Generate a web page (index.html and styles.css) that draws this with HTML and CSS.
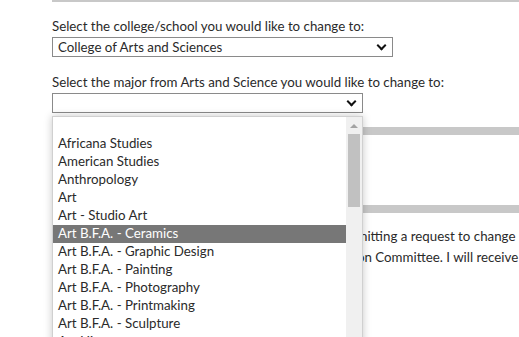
FILE: index.html
```html
<!DOCTYPE html>
<html>
  <head>
    <meta charset="UTF-8">
    <title>Change of Major</title>
    <link rel="stylesheet" href="styles.css">
  </head>
  <body>
    <div class="page">
      <div class="rule rule-top"></div>

      <div class="field">
        <label class="field-label">Select the college/school you would like to change to:</label>
        <div class="select select-wide">
          <span class="select-value">College of Arts and Sciences</span>
          <span class="chevron"></span>
        </div>
      </div>

      <div class="field field-major">
        <label class="field-label">Select the major from Arts and Science you would like to change to:</label>
        <div class="select select-narrow">
          <span class="select-value"></span>
          <span class="chevron"></span>
        </div>

        <div class="listbox">
          <ul class="options">
            <li class="option option-empty">&nbsp;</li>
            <li class="option">Africana Studies</li>
            <li class="option">American Studies</li>
            <li class="option">Anthropology</li>
            <li class="option">Art</li>
            <li class="option">Art - Studio Art</li>
            <li class="option selected">Art B.F.A. - Ceramics</li>
            <li class="option">Art B.F.A. - Graphic Design</li>
            <li class="option">Art B.F.A. - Painting</li>
            <li class="option">Art B.F.A. - Photography</li>
            <li class="option">Art B.F.A. - Printmaking</li>
            <li class="option">Art B.F.A. - Sculpture</li>
            <li class="option">Art History</li>
          </ul>
          <div class="scrollbar">
            <span class="scroll-up"></span>
            <span class="scroll-thumb"></span>
          </div>
        </div>
      </div>

      <div class="rule rule-section rule-first"></div>
      <div class="spacer"></div>
      <div class="rule rule-section"></div>

      <p class="agreement">
        I have read the policy and I understand that I am submitting a request to change<br>
        my major, and that it will be reviewed by the Admission Committee. I will receive
      </p>
    </div>
  </body>
</html>
```

FILE: styles.css
```css
html, body {
  margin: 0;
  height: 100%;
  overflow: hidden;
  background-color: #FFFFFF;
}

body {
  font-family: Lato, "Open Sans", sans-serif;
  font-size: 13.3px;
  color: #2A2A2A;
}

.page {
  padding-left: 52px;
  width: 560px;
}

.rule {
  background-color: #C8C8C8;
}

.rule-top {
  height: 2px;
}

.rule-section {
  height: 8px;
}

.field {
  margin-top: 16px;
}

.field-major {
  position: relative;
  margin-top: 17px;
}

.field-label {
  display: block;
  line-height: 16px;
  margin-bottom: 3px;
}

.select {
  display: flex;
  align-items: center;
  justify-content: space-between;
  height: 20px;
  box-sizing: border-box;
  border: 1px solid #8A8A8A;
  padding: 0 6px 0 5px;
  font-size: 13.3px;
  background-color: #FFFFFF;
}

.select-wide {
  width: 341px;
}

.select-narrow {
  width: 311px;
}

.chevron {
  width: 5px;
  height: 5px;
  border-right: 2px solid #111111;
  border-bottom: 2px solid #111111;
  transform: rotate(45deg);
  margin-top: -3px;
  margin-right: 1px;
}

.listbox {
  position: absolute;
  top: 42px;
  left: 0;
  width: 311px;
  height: 240px;
  display: flex;
  background-color: #FFFFFF;
  border: 1px solid #D0D0D0;
  box-sizing: border-box;
  box-shadow: 0 0 8px rgba(0, 0, 0, 0.22);
  overflow: hidden;
  z-index: 2;
}

.options {
  list-style: none;
  margin: 0;
  padding: 0;
  flex: 1;
}

.option {
  height: 18px;
  box-sizing: border-box;
  line-height: 16px;
  padding: 0 0 2px 5px;
  font-size: 13.3px;
  white-space: nowrap;
}

.option.selected {
  background-color: #777777;
  color: #FFFFFF;
}

.scrollbar {
  position: relative;
  width: 16px;
  background-color: #F0F0F0;
}

.scroll-up {
  position: absolute;
  top: 7px;
  left: 4px;
  border-left: 4px solid transparent;
  border-right: 4px solid transparent;
  border-bottom: 4px solid #A3A3A3;
}

.scroll-thumb {
  position: absolute;
  top: 17px;
  left: 2px;
  width: 12px;
  height: 73px;
  background-color: #C1C1C1;
}

.rule-first {
  margin-top: 14px;
}

.spacer {
  height: 70px;
}

.agreement {
  margin: 13px 0 0;
  line-height: 21px;
  white-space: nowrap;
}
```
